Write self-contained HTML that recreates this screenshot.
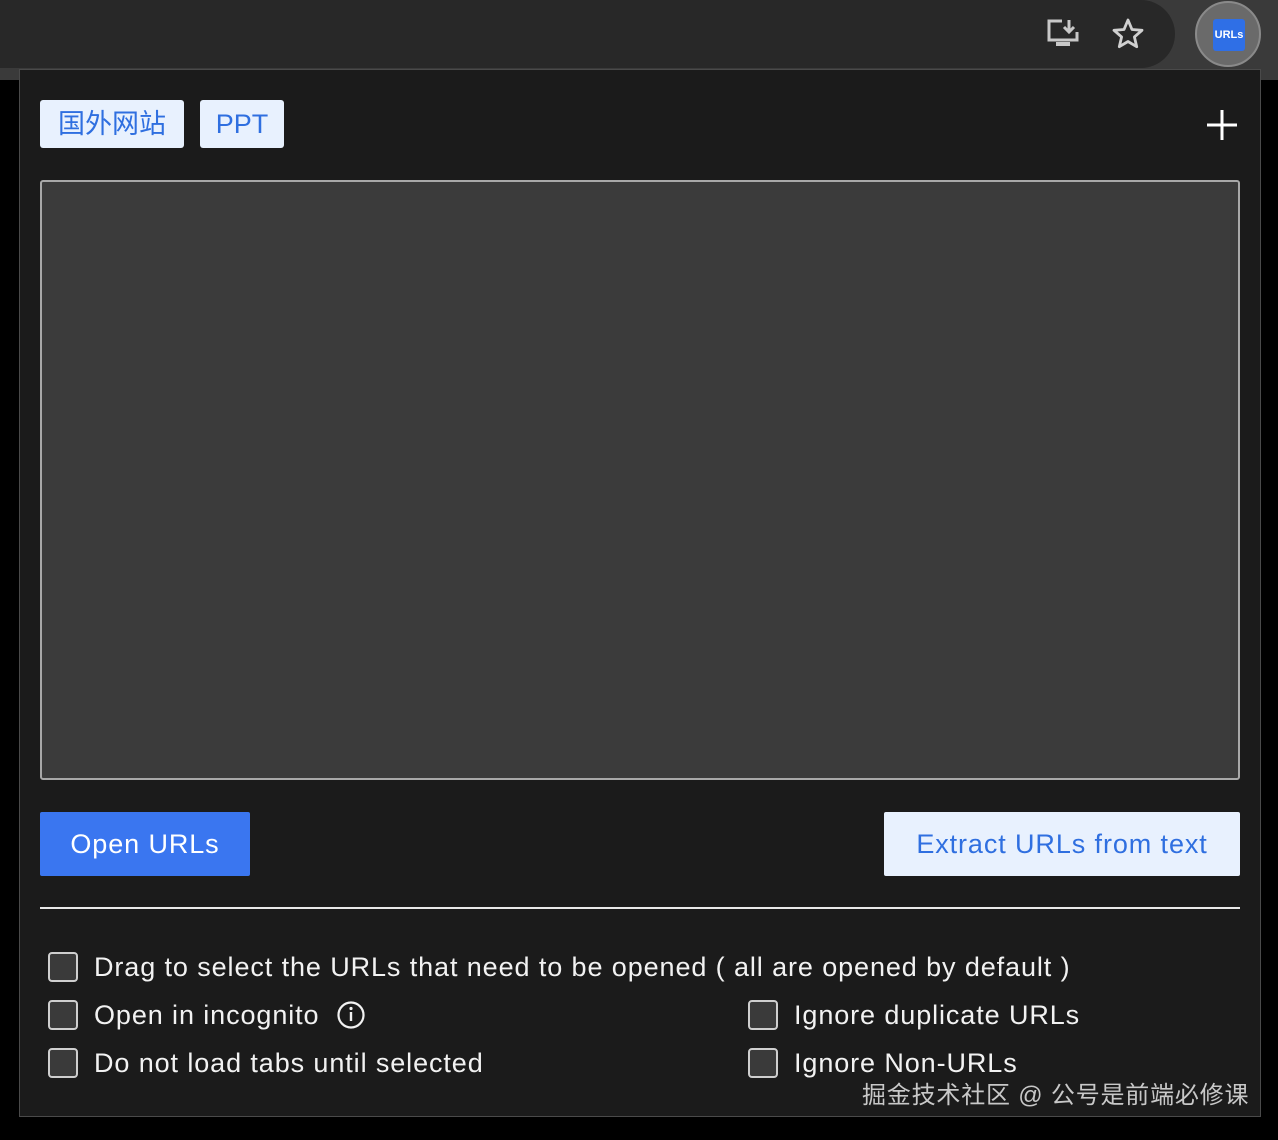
<!DOCTYPE html>
<html><head><meta charset="utf-8"><style>
*{box-sizing:border-box;margin:0;padding:0}
body{width:1278px;height:1140px;background:#000;position:relative;overflow:hidden;font-family:"Liberation Sans","Noto Sans CJK SC",sans-serif}
.top{position:absolute;left:0;top:0;width:1278px;height:80px;background:#3a3a3a}
.pill{position:absolute;left:-40px;top:0;width:1215px;height:68px;background:#282828;border-radius:0 34px 34px 0}
.ext{position:absolute;left:1195px;top:1px;width:66px;height:66px;border-radius:50%;background:#6a6a6a;border:2px solid #8a8a8a}
.ext div{position:absolute;left:16px;top:16px;width:32px;height:32px;background:#2f6fe6;border-radius:3px;color:#fff;font-size:11px;font-weight:bold;text-align:center;line-height:32px}
.pop{position:absolute;left:19px;top:69px;width:1242px;height:1048px;background:#1b1b1b;border:1px solid #4a4a4a}
.tag{position:absolute;top:100px;height:48px;background:#e8f1fe;color:#2f6fe0;border-radius:3px;font-size:27px;line-height:48px;text-align:center}
.ta{position:absolute;left:40px;top:180px;width:1200px;height:600px;background:#3b3b3b;border:2px solid #a8a8a8;border-radius:3px}
.btn{position:absolute;top:812px;height:64px;font-size:27px;line-height:64px;text-align:center;border-radius:2px;letter-spacing:0.9px}
.hr{position:absolute;left:40px;top:907px;width:1200px;height:2px;background:#e8e8e8}
.cb{position:absolute;width:30px;height:30px;border:2px solid #cfcfcf;border-radius:4px;background:#3a3a3a}
.lb{position:absolute;color:#f2f2f2;font-size:27px;line-height:30px;letter-spacing:0.9px;white-space:nowrap}
</style></head><body>
<div class="top"><div class="pill"></div>
<svg style="position:absolute;left:1046px;top:18px" width="36" height="32" viewBox="0 0 36 32" fill="none" stroke="#c8c8c8" stroke-width="3"><path d="M16 3H3v19h28v-8"/><path d="M23 2v12M18 9l5 5 5-5"/><path d="M10 26h14" stroke-width="4"/></svg>
<svg style="position:absolute;left:1111px;top:17px" width="34" height="32" viewBox="0 0 34 32" fill="none" stroke="#d0d0d0" stroke-width="2.8" stroke-linejoin="round"><path d="M17 3l4 9.5 10 .8-7.6 6.6 2.3 9.8L17 24.5 8.3 29.7l2.3-9.8L3 13.3l10-.8z"/></svg>
<div class="ext"><div>URLs</div></div></div>
<div class="pop"></div>
<div class="tag" style="left:40px;width:144px">国外网站</div>
<div class="tag" style="left:200px;width:84px">PPT</div>
<svg style="position:absolute;left:1206px;top:109px" width="32" height="32"><path d="M16 1v30M1 16h30" stroke="#fff" stroke-width="3"/></svg>
<div class="ta"></div>
<div class="btn" style="left:40px;width:210px;background:#3a76f0;color:#fff">Open URLs</div>
<div class="btn" style="left:884px;width:356px;background:#e8f1fe;color:#2f6fe0">Extract URLs from text</div>
<div class="hr"></div>
<div class="cb" style="left:48px;top:952px"></div><div class="lb" style="left:94px;top:952px">Drag to select the URLs that need to be opened ( all are opened by default )</div>
<div class="cb" style="left:48px;top:1000px"></div><div class="lb" style="left:94px;top:1000px">Open in incognito</div>
<svg style="position:absolute;left:336px;top:1000px" width="30" height="30"><circle cx="15" cy="15" r="12.5" fill="none" stroke="#f2f2f2" stroke-width="2.2"/><path d="M15 12v9" stroke="#f2f2f2" stroke-width="2.4"/><circle cx="15" cy="8.5" r="1.6" fill="#f2f2f2"/></svg>
<div class="cb" style="left:48px;top:1048px"></div><div class="lb" style="left:94px;top:1048px">Do not load tabs until selected</div>
<div class="cb" style="left:748px;top:1000px"></div><div class="lb" style="left:794px;top:1000px">Ignore duplicate URLs</div>
<div class="cb" style="left:748px;top:1048px"></div><div class="lb" style="left:794px;top:1048px">Ignore Non-URLs</div>
<div style="position:absolute;left:862px;top:1080px;color:#c8c8c8;font-size:24px;line-height:32px;white-space:nowrap;letter-spacing:0.8px">掘金技术社区 @ 公号是前端必修课</div>
</body></html>
